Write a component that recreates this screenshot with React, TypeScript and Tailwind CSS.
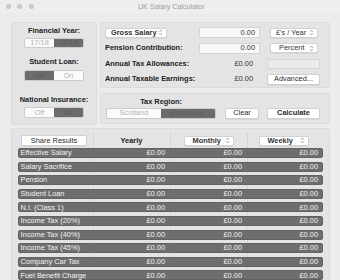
import React from 'react';

const rows = [
  "Effective Salary", "Salary Sacrifice", "Pension", "Student Loan", "N.I. (Class 1)",
  "Income Tax (20%)", "Income Tax (40%)", "Income Tax (45%)", "Company Car Tax", "Fuel Benefit Charge"
];

const UpDown = () => (
  <svg width="5" height="7" viewBox="0 0 5 7" className="shrink-0">
    <path d="M1.1 2.7 L2.5 1.2 L3.9 2.7 M1.1 4.3 L2.5 5.8 L3.9 4.3" fill="none" stroke="#7c7c7c" strokeWidth="0.8" />
  </svg>
);

const Popup: React.FC<{ label: string; bold?: boolean; className?: string }> = ({ label, bold, className }) => (
  <div className={`h-[10px] bg-white rounded-[2px] border border-[#d2d2d2] shadow-[0_0.5px_0.5px_rgba(0,0,0,0.12)] flex items-center justify-between pl-[5px] pr-[3px] text-[#333] ${bold ? 'font-bold' : ''} ${className ?? ''}`}>
    <span className="leading-none">{label}</span>
    <UpDown />
  </div>
);

const Seg: React.FC<{ a: string; b: string; sel: 0 | 1; className?: string }> = ({ a, b, sel, className }) => (
  <div className={`flex rounded-[2px] border border-[#cbcbcb] overflow-hidden bg-[#fbfbfb] ${className ?? ''}`}>
    <div className={`flex-1 flex items-center justify-center leading-none ${sel === 0 ? 'bg-[#6c6c6c] text-[#5c5c5c]' : 'text-[#b4b4b4]'}`}>{a}</div>
    <div className={`flex-1 flex items-center justify-center leading-none ${sel === 1 ? 'bg-[#6c6c6c] text-[#5c5c5c]' : 'text-[#b4b4b4]'}`}>{b}</div>
  </div>
);

const Btn: React.FC<{ label: string; className?: string; bold?: boolean }> = ({ label, className, bold }) => (
  <div className={`h-[11px] bg-white rounded-[2px] border border-[#d0d0d0] shadow-[0_0.5px_0.5px_rgba(0,0,0,0.12)] flex items-center justify-center leading-none text-[#2a2a2a] ${bold ? 'font-bold' : ''} ${className ?? ''}`}>
    {label}
  </div>
);

export default function App() {
  return (
    <div className="w-[340px] h-[280px] overflow-hidden bg-[#ececec] text-[7.4px] text-[#222] font-['Liberation_Sans',Arial,sans-serif] select-none">
      {/* Title bar */}
      <div className="h-[13px] bg-[#eeeeee] flex items-center relative">
        <div className="flex items-center gap-[6.5px] pl-[5.5px]">
          <div className="w-[5px] h-[5px] rounded-full bg-[#d0d0d0] border-[0.5px] border-[#bdbdbd]" />
          <div className="w-[5px] h-[5px] rounded-full bg-[#d0d0d0] border-[0.5px] border-[#bdbdbd]" />
          <div className="w-[5px] h-[5px] rounded-full bg-[#d0d0d0] border-[0.5px] border-[#bdbdbd]" />
        </div>
        <div className="flex-1 text-center text-[#9c9c9c] text-[7.2px] pr-[31px] leading-none">UK Salary Calculator</div>
      </div>

      {/* Top section */}
      <div className="flex gap-[3px] pl-[11px] pr-[10px] pt-[9px]">
        {/* Left panel */}
        <div className="w-[86px] h-[103px] bg-[#e4e4e4] border border-[#dcdcdc] rounded-[3px] flex flex-col items-center font-['Liberation_Sans',Arial,sans-serif]">
          <div className="mt-[3px] leading-[10px] font-bold">Financial Year:</div>
          <Seg a="17/18" b="18/19" sel={1} className="mt-[2px] w-[60px] h-[10px]" />
          <div className="mt-[9px] leading-[10px] font-bold">Student Loan:</div>
          <Seg a="Off" b="On" sel={0} className="mt-[3px] w-[60px] h-[11px]" />
          <div className="mt-[14px] leading-[10px] font-bold">National Insurance:</div>
          <Seg a="Off" b="On" sel={1} className="mt-[2px] w-[60px] h-[11px]" />
        </div>

        {/* Right column */}
        <div className="flex-1 flex flex-col gap-[5px]">
          <div className="h-[66px] bg-[#e4e4e4] border border-[#dcdcdc] rounded-[3px] flex flex-col gap-[3.5px] pl-[4px] pt-[3.5px]">
            <div className="h-[12px] flex items-center">
              <div className="w-[94px]"><Popup label="Gross Salary" bold className="w-[62px]" /></div>
              <div className="w-[61px] h-[11px] bg-[#f8f8f8] border border-[#d4d4d4] flex items-center justify-end pr-[4px] leading-none text-[#333]">0.00</div>
              <Popup label="£'s / Year" className="ml-[10px] w-[48px]" />
            </div>
            <div className="h-[12px] flex items-center">
              <div className="w-[94px] font-bold leading-none">Pension Contribution:</div>
              <div className="w-[61px] h-[11px] bg-[#f8f8f8] border border-[#d4d4d4] flex items-center justify-end pr-[4px] leading-none text-[#333]">0.00</div>
              <Popup label="Percent" className="ml-[10px] w-[48px] !justify-between pl-[8px]" />
            </div>
            <div className="h-[12px] flex items-center">
              <div className="w-[94px] font-bold leading-none">Annual Tax Allowances:</div>
              <div className="w-[61px] text-right pr-[7px] leading-none text-[#333]">£0.00</div>
              <div className="ml-[7px] w-[53px] h-[10px] bg-[#ebebeb] border border-[#d6d6d6] rounded-[1px]" />
            </div>
            <div className="h-[12px] flex items-center">
              <div className="w-[94px] font-bold leading-none">Annual Taxable Earnings:</div>
              <div className="w-[61px] text-right pr-[7px] leading-none text-[#333]">£0.00</div>
              <Btn label="Advanced..." className="ml-[7px] w-[53px]" />
            </div>
          </div>

          <div className="h-[31px] bg-[#e4e4e4] border border-[#dcdcdc] rounded-[3px] flex items-end pb-[4.5px]">
            <div className="ml-[5px] w-[110px] flex flex-col items-center">
              <div className="leading-[10px] font-bold">Tax Region:</div>
              <Seg a="Scotland" b="Rest of UK" sel={1} className="mt-[1px] w-[110px] h-[11px]" />
            </div>
            <Btn label="Clear" className="ml-[9px] w-[34px]" />
            <Btn label="Calculate" bold className="ml-[8px] w-[53px]" />
          </div>
        </div>
      </div>

      {/* Results panel */}
      <div className="ml-[11px] mr-[10px] mt-[3px] h-[160px] bg-[#e4e4e4] border border-[#dcdcdc] rounded-[3px] relative px-[6px] pt-[6px]">
        <div className="absolute left-[81px] top-[3px] bottom-0 w-px bg-[#d6d6d6]" />
        <div className="absolute left-[158px] top-[3px] bottom-0 w-px bg-[#d6d6d6]" />
        <div className="absolute left-[235px] top-[3px] bottom-0 w-px bg-[#d6d6d6]" />

        <div className="relative grid grid-cols-[75px_77px_77px_75px] h-[11px] items-center">
          <div className="pl-[3px]"><Btn label="Share Results" className="w-[66px]" /></div>
          <div className="text-center font-bold leading-none">Yearly</div>
          <div className="flex justify-center"><Popup label="Monthly" bold className="w-[50px] pl-[8px]" /></div>
          <div className="flex justify-center pr-[2px]"><Popup label="Weekly" bold className="w-[50px] pl-[8px]" /></div>
        </div>

        <div className="relative mt-[2px] flex flex-col gap-[3.6px]">
          {rows.map((r) => (
            <div key={r} className="h-[10px] bg-[#6e6e6e] rounded-[2px] border-[0.5px] border-[#626262] grid grid-cols-[75px_77px_77px_75px] items-center text-[#f3f3f3] leading-none">
              <div className="pl-[1.5px] whitespace-nowrap">{r}</div>
              <div className="text-right pr-[6px]">£0.00</div>
              <div className="text-right pr-[6px]">£0.00</div>
              <div className="text-right pr-[5px]">£0.00</div>
            </div>
          ))}
        </div>
      </div>
    </div>
  );
}
